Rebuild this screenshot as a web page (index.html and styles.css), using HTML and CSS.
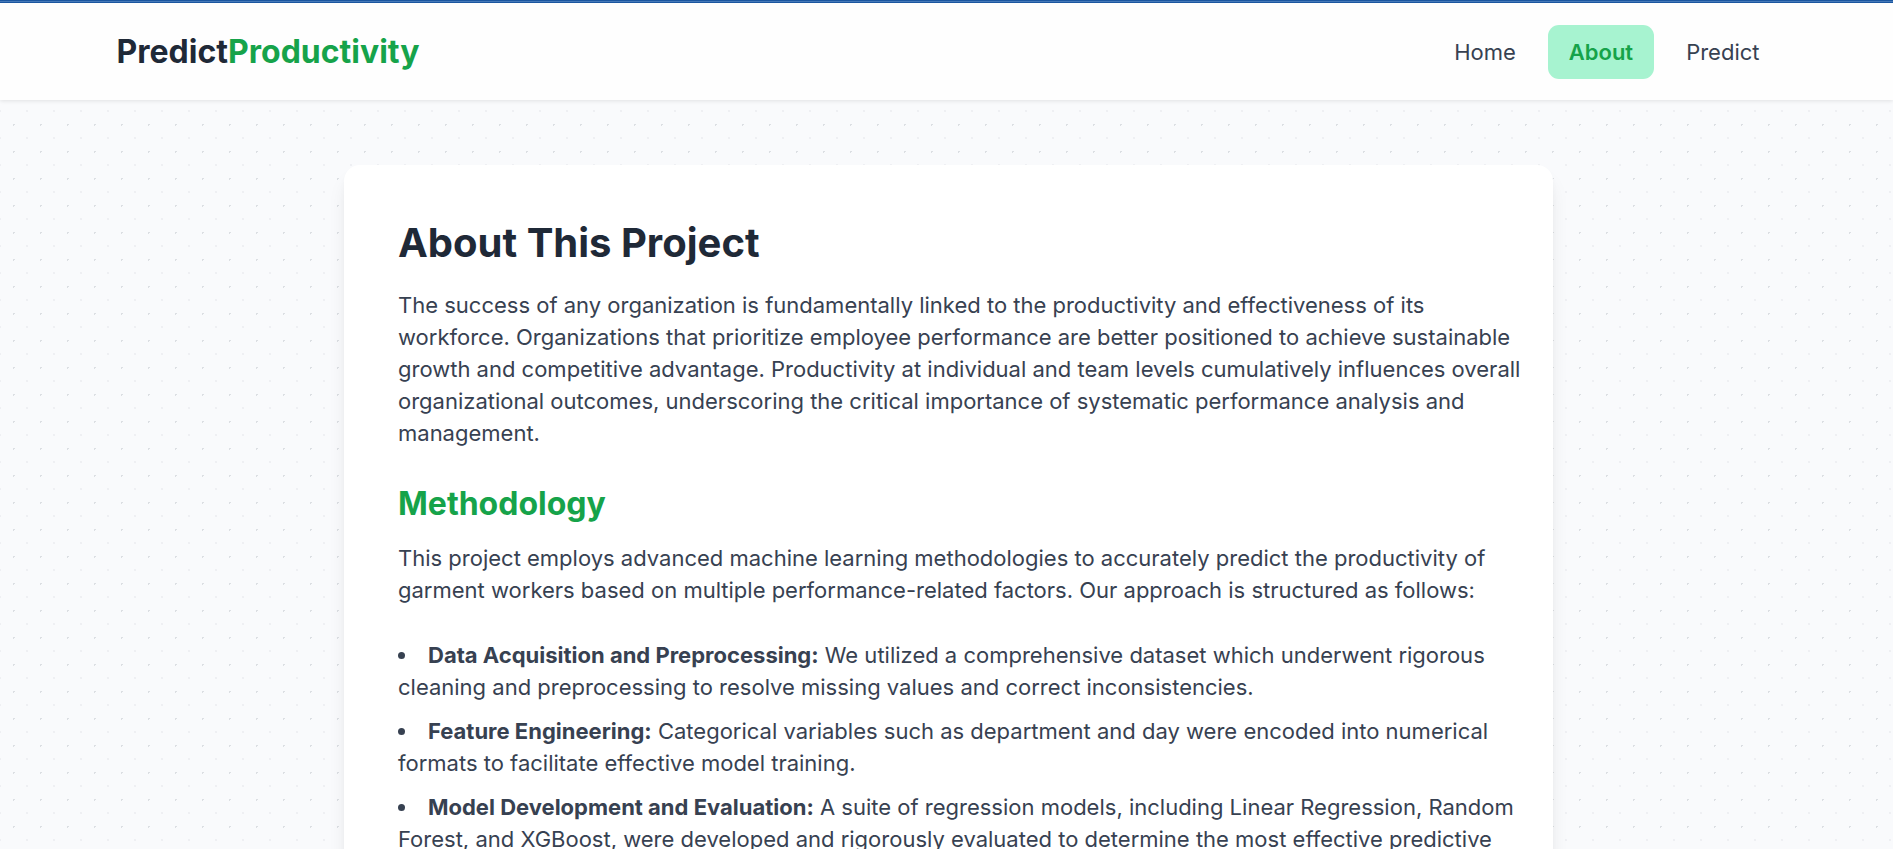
FILE: index.html
```html
<!DOCTYPE html>
<html lang="en">
<head>
<meta charset="utf-8">
<meta name="viewport" content="width=device-width, initial-scale=1">
<title>About | PredictProductivity</title>
<link rel="stylesheet" href="styles.css">
</head>
<body>
<header class="site-header">
  <div class="header-inner">
    <a class="logo" href="#">Predict<span class="logo-accent">Productivity</span></a>
    <nav class="nav" aria-label="Main">
      <a class="nav-link" href="#">Home</a>
      <a class="nav-link nav-link-active" href="#" aria-current="page">About</a>
      <a class="nav-link" href="#">Predict</a>
    </nav>
  </div>
</header>
<main class="content">
  <article class="card">
    <h1 class="title">About This Project</h1>
    <p class="text">The success of any organization is fundamentally linked to the productivity and effectiveness of its workforce. Organizations that prioritize employee performance are better positioned to achieve sustainable growth and competitive advantage. Productivity at individual and team levels cumulatively influences overall organizational outcomes, underscoring the critical importance of systematic performance analysis and management.</p>
    <h2 class="subtitle">Methodology</h2>
    <p class="text">This project employs advanced machine learning methodologies to accurately predict the productivity of garment workers based on multiple performance-related factors. Our approach is structured as follows:</p>
    <ul class="list">
      <li><strong>Data Acquisition and Preprocessing:</strong> We utilized a comprehensive dataset which underwent rigorous cleaning and preprocessing to resolve missing values and correct inconsistencies.</li>
      <li><strong>Feature Engineering:</strong> Categorical variables such as department and day were encoded into numerical formats to facilitate effective model training.</li>
      <li><strong>Model Development and Evaluation:</strong> A suite of regression models, including Linear Regression, Random Forest, and XGBoost, were developed and rigorously evaluated to determine the most effective predictive</li>
    </ul>
  </article>
</main>
</body>
</html>
```
FILE: styles.css
```css
* { box-sizing: border-box; }

html { scrollbar-width: none; }

body {
  margin: 0;
  background-color: #f9fafc;
  background-image:
    radial-gradient(#dcdfe3 1px, transparent 1px),
    radial-gradient(circle at 13px 13px, #d6d9de, transparent 1px);
  background-size: 27px 27px;
  background-position: 0 3px, 14px 17px;
  color: #374151;
  font: 400 22px/32px Inter, "Liberation Sans", sans-serif;
}

.site-header {
  position: relative;
  padding-top: 3px;
  background: linear-gradient(#1a56a0 1px, #4679b8 1px 2px, #1a56a0 2px 3px, #fefefe 3px);
  box-shadow: 0 1px 4px rgba(0, 0, 0, 0.1);
}

.header-inner {
  display: flex;
  align-items: center;
  justify-content: space-between;
  max-width: 1732px;
  min-height: 97px;
  margin: 0 auto;
  padding: 0 32px 0 36px;
}

.logo {
  color: #1f2937;
  font-size: 32px;
  font-weight: 700;
  line-height: 44px;
  text-decoration: none;
}

.logo-accent { color: #16a34a; }

.nav {
  display: flex;
  gap: 11px;
}

.nav-link {
  padding: 11px 21px;
  border-radius: 11px;
  color: #374151;
  text-decoration: none;
}

.nav-link-active {
  background: #a7f3d0;
  color: #16a34a;
  font-weight: 600;
}

.content {
  padding: 65px 32px 65px 36px;
}

.card {
  max-width: 1209px;
  margin: 0 auto;
  padding: 54px 32px 54px 54px;
  border-radius: 16px;
  background: #fff;
  box-shadow: 0 14px 20px -4px rgba(0, 0, 0, 0.1), 0 5px 8px -3px rgba(0, 0, 0, 0.05);
}

.title {
  margin: 0 0 22px;
  color: #1f2937;
  font-size: 40px;
  font-weight: 700;
  line-height: 48px;
}

.text { margin: 0 0 33px; }

.subtitle {
  margin: 0 0 16px;
  color: #16a34a;
  font-size: 32px;
  font-weight: 700;
  line-height: 44px;
}

.list {
  display: grid;
  gap: 12px;
  margin: 0;
  padding: 0;
  list-style-position: inside;
}
```
